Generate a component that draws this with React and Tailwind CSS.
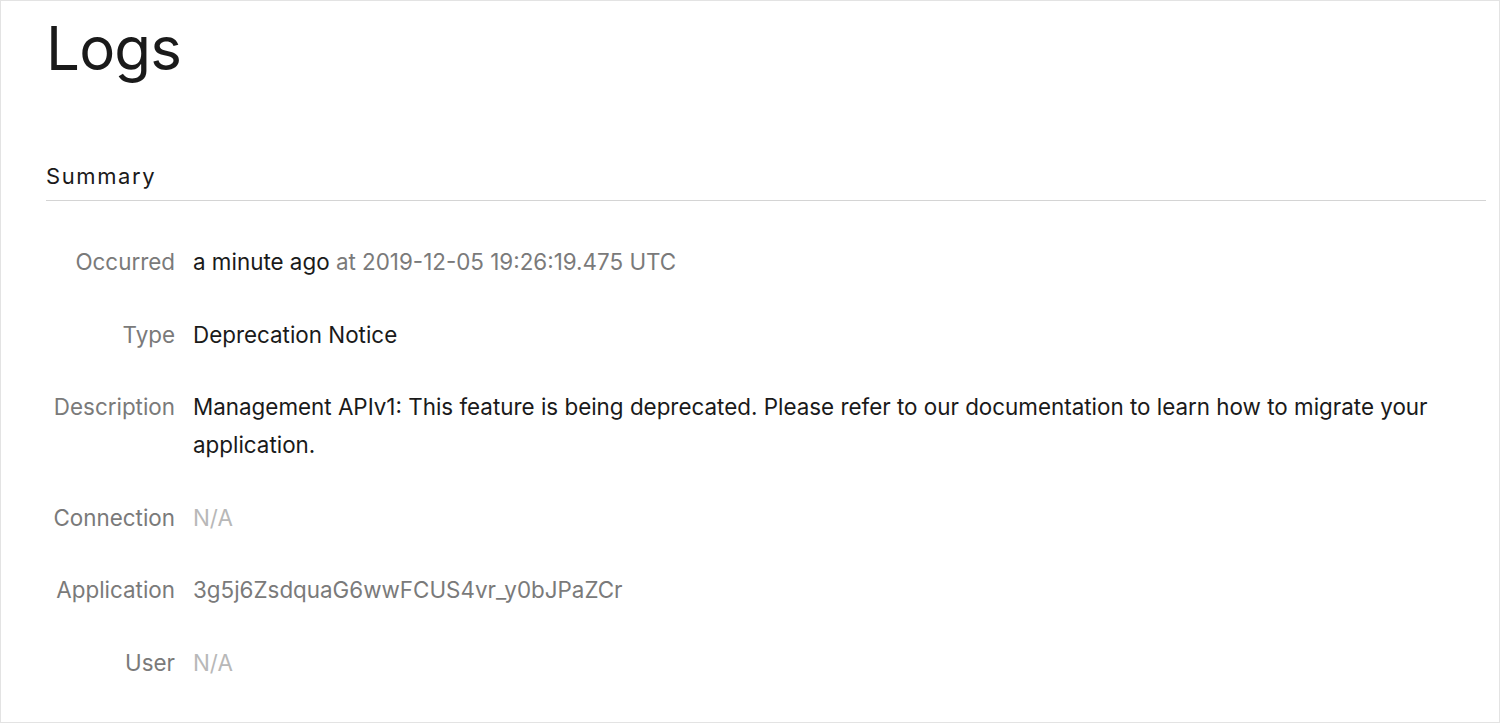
export default function App() {
  const rows = [
    {
      label: "Occurred",
      value: (
        <>
          <span className="text-[#1a1a1a]">a minute ago</span>{" "}
          <span className="text-[#7a7a7a]">at 2019-12-05 19:26:19.475 UTC</span>
        </>
      ),
    },
    { label: "Type", value: <span className="text-[#1a1a1a]">Deprecation Notice</span> },
    {
      label: "Description",
      value: (
        <span className="text-[#1a1a1a]">
          Management APIv1: This feature is being deprecated. Please refer to our documentation to learn how to
          migrate your application.
        </span>
      ),
    },
    { label: "Connection", value: <span className="text-[#b8b8b8]">N/A</span> },
    { label: "Application", value: <span className="text-[#7a7a7a]">3g5j6ZsdquaG6wwFCUS4vr_y0bJPaZCr</span> },
    { label: "User", value: <span className="text-[#b8b8b8]">N/A</span> },
  ];

  return (
    <div
      className="h-[723px] w-[1500px] overflow-hidden border border-[#e3e3e3] bg-white pl-[45px] pr-[13px]"
      style={{ fontFamily: "Inter, 'Noto Sans', sans-serif" }}
    >
      <h1 className="mt-[13px] text-[60px] leading-[68px] font-normal tracking-[-0.8px] text-[#1a1a1a]">Logs</h1>
      <div className="mt-[81px] border-b border-[#d4d4d4] pb-[11px]">
        <h2 className="text-[22px] leading-[26px] tracking-[1.6px] text-[#1a1a1a]">Summary</h2>
      </div>
      <div className="mt-[42px] flex flex-col gap-[34.5px]">
        {rows.map((r) => (
          <div key={r.label} className="flex text-[22.4px] leading-[38px]">
            <div className="w-[129px] shrink-0 text-right text-[#7a7a7a]">{r.label}</div>
            <div className="pl-[18px]">{r.value}</div>
          </div>
        ))}
      </div>
    </div>
  );
}
